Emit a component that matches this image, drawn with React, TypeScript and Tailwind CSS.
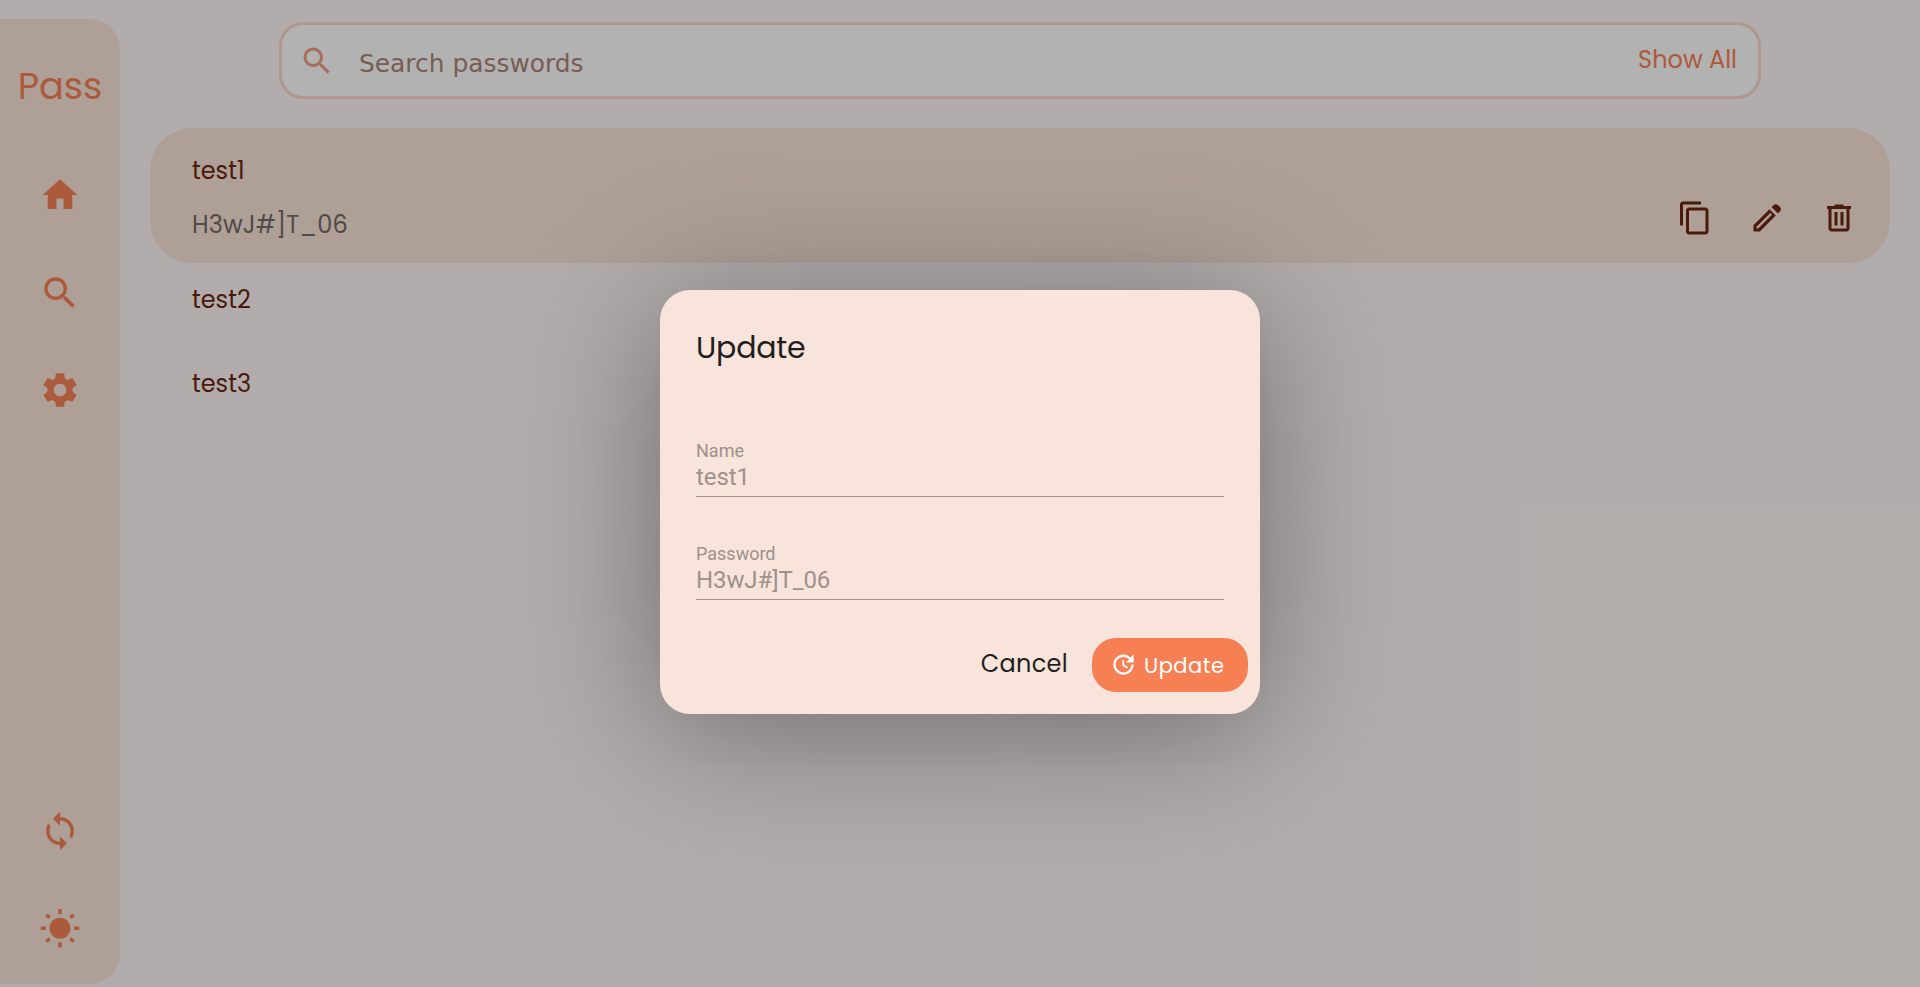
import { MdHome, MdSearch, MdSettings, MdSync, MdWbSunny, MdContentCopy, MdUpdate } from "react-icons/md";
import type { ReactNode } from "react";

const poppins = "font-['Poppins','Inter',sans-serif] whitespace-nowrap";

function NavButton({ label, children }: { label: string; children: ReactNode }) {
  return (
    <button aria-label={label} className="flex h-[97.5px] w-full items-center justify-center text-[42px] text-[#f78156]">
      {children}
    </button>
  );
}

function PencilIcon() {
  return (
    <svg viewBox="0 0 24 24" className="size-9" fill="currentColor">
      <path d="M5 19h1.1l9.2-9.2-1.1-1.1L5 17.9ZM19.3 8.925l-4.25-4.2 1.4-1.4q.575-.575 1.413-.575.837 0 1.412.575l1.4 1.4q.575.575.6 1.388.025.812-.55 1.387ZM17.85 10.4 7.25 21H3v-4.25l10.6-10.6Z" />
    </svg>
  );
}

function TrashIcon() {
  return (
    <svg viewBox="0 0 24 24" className="size-9" fill="currentColor">
      <path d="M7 21q-.825 0-1.413-.587Q5 19.825 5 19V6H4V4h5V3h6v1h5v2h-1v13q0 .825-.587 1.413Q17.825 21 17 21ZM17 6H7v13h10ZM9 17h2V8H9Zm4 0h2V8h-2Z" />
    </svg>
  );
}

function Sidebar() {
  return (
    <aside className="mt-[18.5px] flex h-[965.5px] w-[120px] flex-col rounded-r-[30px] bg-[#fae5d8]">
      <h1 className={`${poppins} flex h-[128px] items-center justify-center pt-[8px] text-[36.8px] text-[#f78156]`}>
        Pass
      </h1>
      <nav className="flex flex-1 flex-col justify-between pb-[6.5px]">
        <div>
          <NavButton label="Home"><MdHome /></NavButton>
          <NavButton label="Search"><MdSearch /></NavButton>
          <NavButton label="Settings"><MdSettings /></NavButton>
        </div>
        <div>
          <NavButton label="Sync"><MdSync /></NavButton>
          <NavButton label="Theme"><MdWbSunny /></NavButton>
        </div>
      </nav>
    </aside>
  );
}

function SearchBar() {
  return (
    <div className="ml-[129px] mt-[22px] flex h-[77px] w-[1482px] items-center rounded-[24px] border-3 border-[#fbd8cc] bg-white pl-[17px] pr-[21px]">
      <MdSearch className="text-[36px] text-[#f39d82]" />
      <span className="ml-[24px] mt-[6px] flex-1 font-['DejaVu_Sans',sans-serif] text-[24.9px] text-[#ae8678]">Search passwords</span>
      <button className={`${poppins} mb-[2px] text-[24px] text-[#f78156]`}>Show All</button>
    </div>
  );
}

function Entry({ name }: { name: string }) {
  return <li className={`${poppins} flex h-[84px] items-center pb-[11px] pl-[42px] text-[24px] text-[#6b2711]`}>{name}</li>;
}

function Field({ label, value }: { label: string; value: string }) {
  return (
    <label className="flex h-[103px] flex-col font-['Roboto',sans-serif] text-[#9d918c]">
      <span className="text-[18px] leading-[25px]">{label}</span>
      <span className="h-[34px] border-b border-[#a3938b] text-[24px] leading-[29px] tracking-[-0.1px]">{value}</span>
    </label>
  );
}

export default function App() {
  return (
    <div className="relative flex h-[987px] w-[1920px] overflow-hidden bg-[#fff8f6]">
      <Sidebar />
      <main className="flex flex-1 flex-col pl-[30px] pr-[30px]">
        <SearchBar />
        <ul className="mt-[29px]">
          <li className="flex h-[135px] items-end justify-between rounded-[42px] bg-[#fae5d8] pl-[42px] pr-[33px] text-[24px]">
            <div className={`${poppins} flex h-full flex-col pt-[24px]`}>
              <span className="leading-[38px] text-[#6b2711]">test1</span>
              <span className="mt-[16px] leading-[38px] tracking-[0.15px] text-[#766a66]">H3wJ#]T_06</span>
            </div>
            <div className="flex items-center gap-9 pb-[27px] text-[#6b2711]">
              <MdContentCopy className="size-9" />
              <PencilIcon />
              <TrashIcon />
            </div>
          </li>
          <Entry name="test2" />
          <Entry name="test3" />
        </ul>
      </main>
      <div className="absolute inset-0 bg-black/30">
        <section className="absolute left-[660px] top-[289.5px] flex h-[424px] w-[600px] flex-col rounded-[30px] bg-[#f8e4db] px-9 shadow-[0_18px_140px_rgba(0,0,0,0.38)]">
          <h2 className={`${poppins} mt-[38px] text-[30px] leading-[40px] tracking-[-0.2px] text-[#1f1f1f]`}>Update</h2>
          <div className="mt-[70.5px] flex flex-col">
            <Field label="Name" value="test1" />
            <Field label="Password" value="H3wJ#]T_06" />
          </div>
          <div className="-mr-6 -mt-[6.5px] flex items-center justify-end">
            <button className={`${poppins} mb-[2px] text-[24px] tracking-[0.3px] text-[#1f1f1f]`}>Cancel</button>
            <button className={`${poppins} ml-6 flex h-[54px] w-[156px] items-center rounded-[24px] bg-[#f77f54] pl-[18px] text-[21px] tracking-[0.5px] text-white`}>
              <MdUpdate className="mr-[7px] size-[27px]" />
              <span className="mt-[2px]">Update</span>
            </button>
          </div>
        </section>
      </div>
    </div>
  );
}
